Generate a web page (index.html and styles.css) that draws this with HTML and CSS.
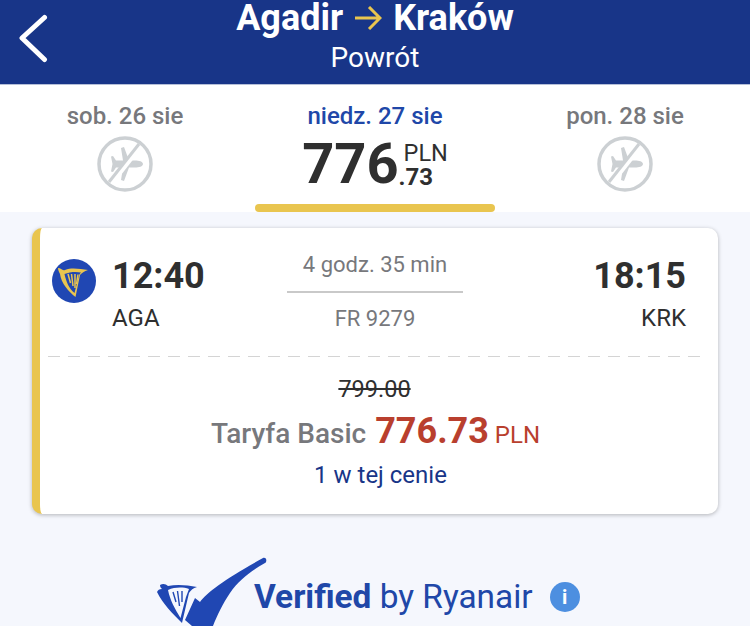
FILE: index.html
```html
<!DOCTYPE html>
<html lang="pl">
  <head>
    <meta charset="UTF-8" />
    <meta name="viewport" content="width=device-width, initial-scale=1.0" />
    <title>Powrót</title>
    <link rel="stylesheet" href="styles.css">
  </head>
  <body>
    <header class="header">
      <svg class="backIcon" width="32" height="50" viewBox="0 0 32 50">
        <path d="M26.500 3.500 L4 24 L26.500 45.500" fill="none" stroke="#fff" stroke-width="5" stroke-linecap="round" stroke-linejoin="round" />
      </svg>
      <h1 class="route">
        <span>Agadir</span>
        <svg class="routeArrow" width="28" height="24" viewBox="0 0 28 24">
          <path d="M1 12 H26 M15 1 L26 12 L15 23" fill="none" stroke="#e9c54f" stroke-width="3" />
        </svg>
        <span>Kraków</span>
      </h1>
      <p class="subtitle">Powrót</p>
    </header>

    <nav class="dates">
      <div class="dateCol">
        <p class="dateLabel">sob. 26 sie</p>
        <svg class="noFlight" width="56" height="56" viewBox="0 0 56 56">
          <use href="#planeOff" />
        </svg>
      </div>
      <div class="dateCol active">
        <p class="dateLabel">niedz. 27 sie</p>
        <div class="datePrice">
          <span class="priceMain">776</span>
          <span class="priceSide">
            <span class="priceCur">PLN</span>
            <span class="priceCents">.73</span>
          </span>
        </div>
      </div>
      <div class="dateCol">
        <p class="dateLabel">pon. 28 sie</p>
        <svg class="noFlight" width="56" height="56" viewBox="0 0 56 56">
          <use href="#planeOff" />
        </svg>
      </div>
    </nav>

    <main class="content">
      <section class="card">
        <div class="flight">
          <svg class="logo" width="44" height="44" viewBox="0 0 44 44">
            <circle cx="22" cy="22" r="22" fill="#2047b3" />
            <path d="M6 9 C9 9 10 12 13 11 C20 8 28 10 36 11 C32 12 30 14 28 16 L23.500 38 C17 33 9 24 8 15 C7 13 6 11 6 9 Z" fill="#e9c54f" />
            <path d="M12.500 15 C18 12.500 25 12.500 29 13.500 C27.500 15 27 16 26.500 18 L22.500 34 C17 30 14 22 12.500 15 Z" fill="#2047b3" />
            <path d="M16 15 L18.500 24 M19.500 15 L21 27 M23 15 L23 29 M26 15.500 L24.500 25" fill="none" stroke="#e9c54f" stroke-width="1.500" />
          </svg>
          <div class="place">
            <p class="time">12:40</p>
            <p class="code">AGA</p>
          </div>
          <div class="middle">
            <p class="duration">4 godz. 35 min</p>
            <p class="flightNo">FR 9279</p>
          </div>
          <div class="place placeEnd">
            <p class="time">18:15</p>
            <p class="code">KRK</p>
          </div>
        </div>
        <div class="divider"></div>
        <div class="fare">
          <p class="oldPrice">799.00</p>
          <p class="fareLine">
            <span class="fareName">Taryfa Basic</span>
            <span class="farePrice">776.73</span>
            <span class="fareCur">PLN</span>
          </p>
          <p class="seats">1 w tej cenie</p>
        </div>
      </section>

      <div class="verified">
        <svg class="verifiedMark" width="112" height="70" viewBox="0 0 112 70">
          <path d="M5 29 C8 27 11 28 13 30 C22 28 32 29 42 31 C38 32 36 34 34 37 L27 67 C18 58 8 48 2 36 C3 34 4 33 7 33 C6 32 5 31 5 29 Z" fill="#2047b3" />
          <path d="M13 34 C20 31 28 31 34 33 C33 36 32 38 31 41 L25.500 62 C20 53 15 44 13 34 Z" fill="#f5f7fd" />
          <path d="M18 36 L21 46 M22.500 35 L24.500 50 M27 35 L27 46" fill="none" stroke="#2047b3" stroke-width="1.400" />
          <path d="M30 64 L40 42 L45 46 C52 36 72 22 108 2 C112 1 112 6 110 7 C96 15 84 24 75 37 C68 47 62 60 58 70 L37 70 Z" fill="#2047b3" />
        </svg>
        <p class="verifiedText"><b>Verified</b> by Ryanair</p>
        <span class="infoBadge">i</span>
      </div>
    </main>

    <svg width="0" height="0" class="defs">
      <defs>
        <g id="planeOff">
          <circle cx="28" cy="28" r="26" fill="none" stroke="#ccd0d3" stroke-width="3.500" />
          <path d="M46 28 C46 25.500 42 24.500 38 24.500 L32 24.500 L27 11 L24 12 L26 24.500 L19 24.500 L16 20 L14 20.500 L15.500 28 L14 35.500 L16 36 L19 31.500 L26 31.500 L24 44 L27 45 L32 31.500 L38 31.500 C42 31.500 46 30.500 46 28 Z" fill="#ccd0d3" />
          <path d="M14 47 L43 10" stroke="#fff" stroke-width="6" />
          <path d="M12 46 L42 8" stroke="#ccd0d3" stroke-width="3" />
        </g>
      </defs>
    </svg>
  </body>
</html>
```

FILE: styles.css
```css
* {
  margin: 0;
  padding: 0;
  box-sizing: border-box;
  font-family: "Roboto", sans-serif;
}
body {
  height: 626px;
  overflow: hidden;
  background-color: #f5f7fd;
}
.defs {
  position: absolute;
}
.header {
  position: relative;
  height: 85px;
  background-color: #183588;
  border-bottom: 1px solid #b5bfd8;
  color: white;
  text-align: center;
}
.backIcon {
  position: absolute;
  left: 18px;
  top: 14px;
}
.route {
  display: flex;
  justify-content: center;
  align-items: center;
  gap: 11px;
  height: 36px;
  font-size: 36px;
  font-weight: 700;
  line-height: 36px;
}
.subtitle {
  font-size: 28px;
  font-weight: 400;
  line-height: 30px;
  margin-top: 7px;
}
.dates {
  display: grid;
  grid-template-columns: 250px 250px 250px;
  height: 127px;
  background-color: white;
}
.dateCol {
  display: flex;
  flex-direction: column;
  align-items: center;
  padding-top: 17px;
}
.dateCol.active {
  position: relative;
}
.dateCol.active::after {
  content: "";
  position: absolute;
  left: 5px;
  right: 5px;
  bottom: 0;
  height: 8px;
  border-radius: 4px;
  background-color: #e9c54f;
}
.dateLabel {
  font-size: 24px;
  font-weight: 500;
  line-height: 28px;
  color: #77787c;
}
.active .dateLabel {
  color: #2047a8;
}
.noFlight {
  margin-top: 6px;
}
.datePrice {
  display: flex;
  align-items: flex-start;
  margin-top: 2px;
}
.priceMain {
  font-size: 56px;
  font-weight: 700;
  line-height: 64px;
  color: #2f2f2f;
}
.priceSide {
  display: flex;
  flex-direction: column;
  padding-top: 9px;
}
.priceCur {
  font-size: 23.500px;
  line-height: 24px;
  margin-left: 5px;
  color: #2f2f2f;
}
.priceCents {
  font-size: 24px;
  font-weight: 700;
  line-height: 24px;
  color: #2f2f2f;
}
.content {
  padding: 16px 32px 0;
}
.card {
  height: 286px;
  background-color: white;
  border-left: 8px solid #e9c54f;
  border-radius: 10px;
  box-shadow: 0 1px 4px rgba(0, 0, 0, 0.28);
  padding: 0 18px 0 8px;
}
.flight {
  display: flex;
  align-items: flex-start;
  height: 128px;
  padding: 28px 14px 0 4px;
}
.divider {
  height: 1px;
  background: repeating-linear-gradient(90deg, #d4d4d4 0 12px, transparent 12px 20px);
}
.logo {
  margin-top: 3px;
  margin-right: 16px;
}
.place {
  width: 120px;
}
.placeEnd {
  text-align: right;
  margin-left: auto;
}
.time {
  font-size: 36px;
  font-weight: 700;
  line-height: 40px;
  color: #2f2f2f;
}
.code {
  font-size: 24px;
  line-height: 28px;
  margin-top: 8px;
  color: #2f2f2f;
}
.middle {
  width: 176px;
  margin-left: 55px;
  text-align: center;
  color: #77787c;
  font-size: 22px;
}
.duration {
  line-height: 26px;
  padding-bottom: 13px;
  border-bottom: 2px solid #c9c9c9;
  margin-top: -4px;
}
.flightNo {
  line-height: 26px;
  margin-top: 13px;
}
.fare {
  text-align: center;
  padding: 17px 0 0 3px;
}
.oldPrice {
  font-size: 23.500px;
  line-height: 30px;
  margin-right: 2px;
  color: #2f2f2f;
  text-decoration: line-through;
}
.fareLine {
  line-height: 44px;
  margin-top: 5px;
}
.fareName {
  font-size: 28px;
  font-weight: 500;
  color: #77787c;
}
.farePrice {
  font-size: 36px;
  font-weight: 700;
  color: #b93f2e;
  margin: 0 2px 0 5px;
}
.fareCur {
  font-size: 24px;
  color: #b93f2e;
}
.seats {
  font-size: 24px;
  line-height: 30px;
  margin: 0 0 0 10px;
  color: #183588;
}
.verified {
  display: flex;
  align-items: flex-start;
  height: 70px;
  margin-top: 42px;
  padding-left: 123px;
  color: #2047a8;
}
.verifiedMark {
  flex: none;
}
.verifiedText {
  font-size: 33.400px;
  line-height: 40px;
  margin: 21px 0 0 -13px;
  white-space: nowrap;
}
.verifiedText b {
  font-weight: 700;
}
.infoBadge {
  flex: none;
  width: 30px;
  height: 30px;
  margin: 26px 0 0 17px;
  border-radius: 50%;
  background-color: #4d8fe0;
  color: white;
  font-size: 20px;
  font-weight: 700;
  line-height: 30px;
  text-align: center;
}
```
